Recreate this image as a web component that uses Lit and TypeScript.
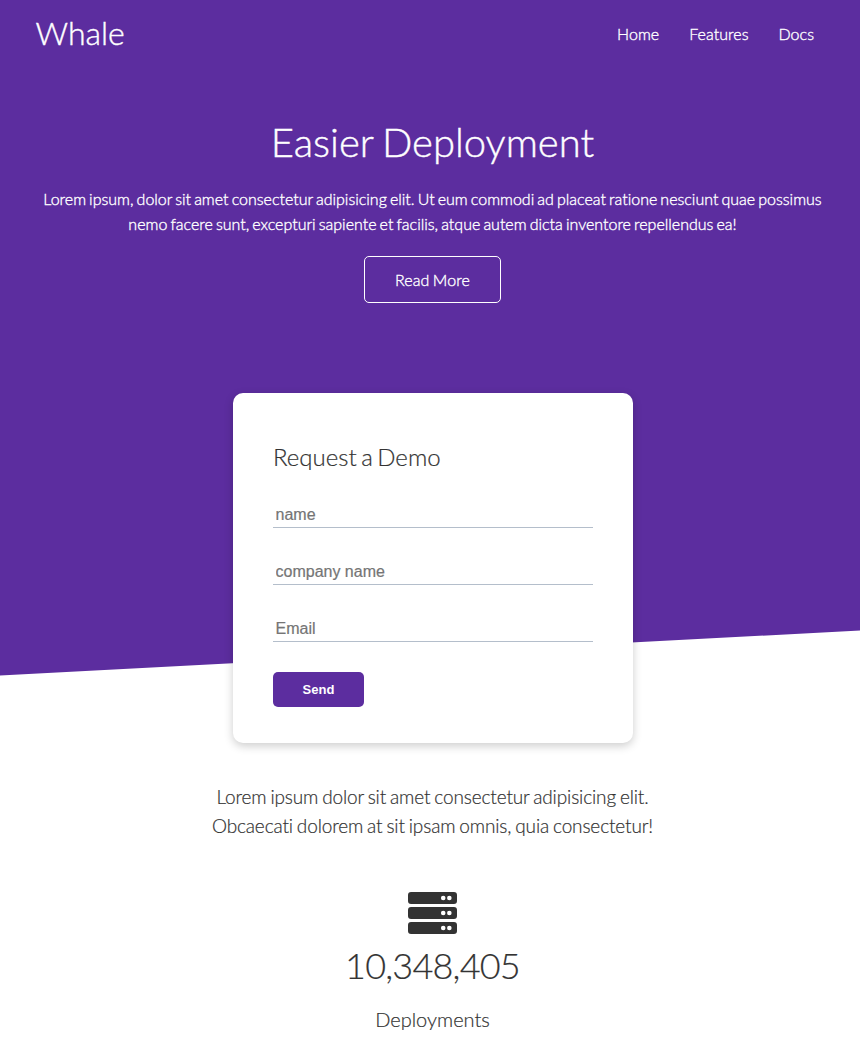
import { LitElement, html, css } from "lit";
import { customElement } from "lit/decorators.js";

@customElement("app-root")
export class AppRoot extends LitElement {
  static styles = css`
    :host { display: block; height: 1044px; overflow: hidden; background: #fff; color: #333; font-family: Lato, sans-serif; font-weight: 300; font-size: 16px; line-height: 25px; font-variant-ligatures: none; word-spacing: -1.25px; -webkit-text-stroke: 0.2px currentColor; }
    * { box-sizing: border-box; margin: 0; padding: 0; }
    a { color: #fff; text-decoration: none; }
    h1, h2, h3 { font-weight: 300; }
    .navbar { height: 70px; background: #5c2d9f; color: #fff; display: flex; justify-content: space-between; align-items: center; padding: 0 36px 2px; }
    .logo { font-size: 32px; line-height: 40px; padding-bottom: 2px; margin-left: -0.5px; -webkit-text-stroke-width: 0.4px; }
    .nav { display: flex; gap: 30px; padding: 0 10px 2px 0; letter-spacing: 0.04px; }
    .nav a, .intro p, .more { -webkit-text-stroke-width: 0.35px; }
    .showcase { background: #5c2d9f; height: 606px; clip-path: polygon(0 0, 100% 0, 100% 560.5px, 0 605.5px); color: #fff; text-align: center; }
    .intro { padding: 40px 35px 0; margin-left: 5px; }
    .intro h1 { font-size: 40px; line-height: 64px; word-spacing: -2px; -webkit-text-stroke-width: 0.4px; }
    .intro p { margin-top: 12px; }
    .more { display: inline-block; border: 1px solid #fff; border-radius: 5px; padding: 10px 30px; margin-top: 20px; letter-spacing: 0.13px; }
    .card { position: relative; width: 400px; height: 350px; margin: -283px 0 0 233px; padding: 40px; border-radius: 10px; background: #fff; box-shadow: 0 3px 10px rgba(0,0,0,.2); }
    .card h2 { font-size: 24px; line-height: 48px; margin-bottom: 20px; word-spacing: -2px; }
    .field { display: block; width: 100%; height: 27px; border: 0; border-bottom: 1px solid #b4becb; font: 16px "Liberation Sans", sans-serif; padding: 4px 3px 2px 2.5px; margin-bottom: 30px; background: none; outline: none; }
    .send { display: block; width: 91px; height: 35px; border: 0; border-radius: 5px; background: #5c2d9f; color: #fff; font: bold 13px "Liberation Sans", sans-serif; word-spacing: 0; -webkit-text-stroke-width: 0; }
    .stats { text-align: center; padding: 39px 0 0 5px; }
    .stats h3 { font-size: 19px; line-height: 29px; letter-spacing: -0.13px; word-spacing: -1.1px; }
    .icon { display: block; width: 49px; height: 42px; margin: 52px auto 0; }
    .number { font-size: 36px; line-height: 58px; margin-top: 2px; letter-spacing: -0.8px; }
    .label { font-size: 20px; line-height: 32px; margin-top: 9px; }
  `;

  render() {
    return html`
      <header class="navbar">
        <div class="logo">Whale</div>
        <nav class="nav"><a href="#">Home</a><a href="#">Features</a><a href="#">Docs</a></nav>
      </header>
      <section class="showcase">
        <div class="intro">
          <h1>Easier Deployment</h1>
          <p>Lorem ipsum, dolor sit amet consectetur adipisicing elit. Ut eum commodi ad placeat ratione nesciunt quae possimus nemo facere sunt, excepturi sapiente et facilis, atque autem dicta inventore repellendus ea!</p>
          <a class="more" href="#">Read More</a>
        </div>
      </section>
      <form class="card">
        <h2>Request a Demo</h2>
        <input class="field" placeholder="name" />
        <input class="field" placeholder="company name" />
        <input class="field" placeholder="Email" />
        <button class="send" type="button">Send</button>
      </form>
      <section class="stats">
        <h3>Lorem ipsum dolor sit amet consectetur adipisicing elit.<br />Obcaecati dolorem at sit ipsam omnis, quia consectetur!</h3>
        <svg class="icon" viewBox="0 0 512 448" preserveAspectRatio="none" fill="#333">
          <path d="M480 128H32a32 32 0 0 1-32-32V32A32 32 0 0 1 32 0h448a32 32 0 0 1 32 32v64a32 32 0 0 1-32 32zm-48-88a24 24 0 1 0 0 48 24 24 0 0 0 0-48zm-64 0a24 24 0 1 0 0 48 24 24 0 0 0 0-48zM480 288H32a32 32 0 0 1-32-32v-64a32 32 0 0 1 32-32h448a32 32 0 0 1 32 32v64a32 32 0 0 1-32 32zm-48-88a24 24 0 1 0 0 48 24 24 0 0 0 0-48zm-64 0a24 24 0 1 0 0 48 24 24 0 0 0 0-48zM480 448H32a32 32 0 0 1-32-32v-64a32 32 0 0 1 32-32h448a32 32 0 0 1 32 32v64a32 32 0 0 1-32 32zm-48-88a24 24 0 1 0 0 48 24 24 0 0 0 0-48zm-64 0a24 24 0 1 0 0 48 24 24 0 0 0 0-48z" />
        </svg>
        <div class="number">10,348,405</div>
        <div class="label">Deployments</div>
      </section>
    `;
  }
}
